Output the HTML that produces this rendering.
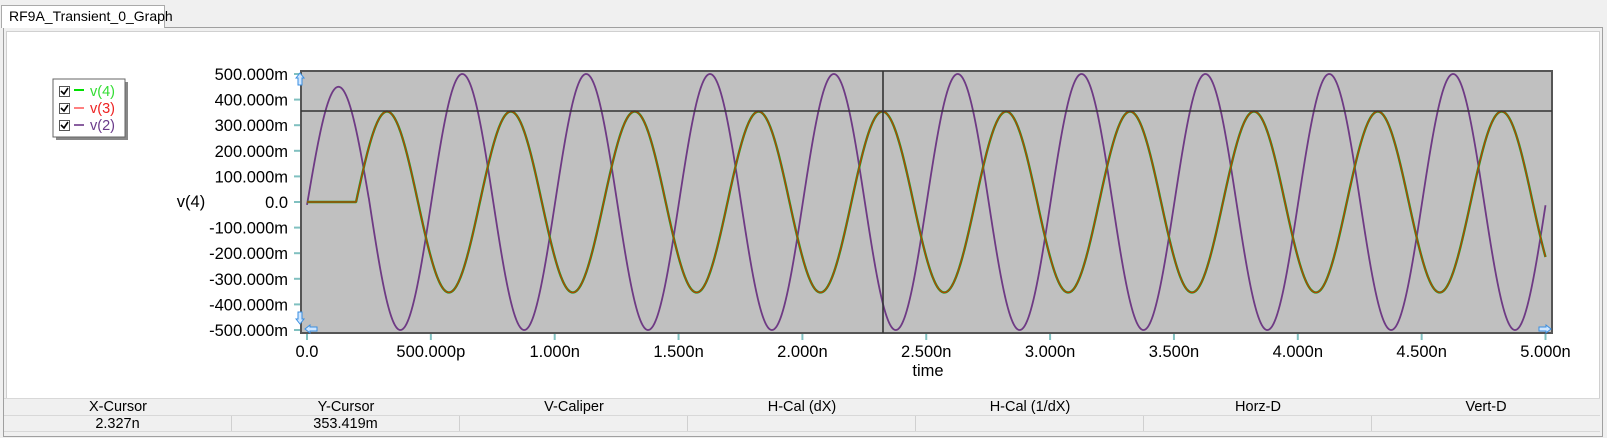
<!DOCTYPE html>
<html><head><meta charset="utf-8">
<style>
*{margin:0;padding:0;box-sizing:border-box}
body{width:1607px;height:438px;background:#f0f0f0;font-family:"Liberation Sans",sans-serif;position:relative;overflow:hidden}
.tab{position:absolute;left:1px;top:5px;width:164px;height:23px;background:#fff;border:1px solid #aaa;border-bottom:none;font-size:14px;line-height:21px;padding-left:7px;color:#000;z-index:2}
.panel{position:absolute;left:3px;top:27px;width:1600px;height:410px;border:1px solid #a0a0a0;background:#f0f0f0}
.inner{position:absolute;left:2px;top:3px;width:1594px;height:368px;background:#fff;border:1px solid #d0d0d0}
.tbl{position:absolute;left:0;top:370px;width:1596px;height:35px;font-size:14.5px;color:#000}
.row{position:absolute;left:0;width:1596px;height:17px;display:flex}
.row div{width:228px;text-align:center;line-height:17px}
.r1{top:0;border-top:1px solid #d8d8d8}
.r2{top:17px;border-top:1px solid #d8d8d8;border-bottom:1px solid #d8d8d8}
.r2 div{border-right:1px solid #d0d0d0}
svg{position:absolute;left:0;top:0}
</style></head><body>
<div class="tab">RF9A_Transient_0_Graph</div>
<div class="panel"><div class="inner"></div>
<div class="tbl">
<div class="row r1"><div>X-Cursor</div><div>Y-Cursor</div><div>V-Caliper</div><div>H-Cal (dX)</div><div>H-Cal (1/dX)</div><div>Horz-D</div><div>Vert-D</div></div>
<div class="row r2"><div>2.327n</div><div>353.419m</div><div></div><div></div><div></div><div></div><div style="border-right:none"></div></div>
</div></div>
<svg width="1607" height="438" xmlns="http://www.w3.org/2000/svg" font-family="Liberation Sans, sans-serif">
<rect x="301" y="71" width="1251" height="262" fill="#c0c0c0" stroke="#555" stroke-width="2"/>
<g id="ticks" stroke="#80c0c0" stroke-width="2"></g>
<g id="ylab" font-size="16.5" text-anchor="end" fill="#000"></g>
<g id="xlab" font-size="16.5" text-anchor="middle" fill="#000"></g>
<path id="p2" fill="none" stroke="#6e3a84" stroke-width="1.8"/>
<path id="p4" fill="none" stroke="#22a022" stroke-width="2.4"/>
<path id="p3" fill="none" stroke="#c03a00" stroke-width="1.2"/>
<line x1="301" y1="111" x2="1552" y2="111" stroke="#333" stroke-width="1.6"/>
<line x1="883" y1="71" x2="883" y2="333" stroke="#333" stroke-width="1.6"/>
<text x="191" y="207" font-size="16.5" text-anchor="middle">v(4)</text>
<text x="928" y="376" font-size="16.5" text-anchor="middle">time</text>
<rect x="56" y="82" width="72" height="58" fill="#888"/>
<rect x="53" y="79" width="72" height="58" fill="#fff" stroke="#666" stroke-width="1"/>
<g font-size="14.5">
<rect x="59.5" y="86.5" width="10" height="10" fill="#fff" stroke="#555"/><path d="M61 91l3 3 4-6" stroke="#000" stroke-width="1.6" fill="none"/>
<line x1="74" y1="90" x2="84" y2="90" stroke="#00e000" stroke-width="2"/><text x="90" y="96" fill="#33dd33">v(4)</text>
<rect x="59.5" y="103.5" width="10" height="10" fill="#fff" stroke="#555"/><path d="M61 108l3 3 4-6" stroke="#000" stroke-width="1.6" fill="none"/>
<line x1="74" y1="108" x2="84" y2="108" stroke="#ff8080" stroke-width="2"/><text x="90" y="113" fill="#ee2222">v(3)</text>
<rect x="59.5" y="120.5" width="10" height="10" fill="#fff" stroke="#555"/><path d="M61 125l3 3 4-6" stroke="#000" stroke-width="1.6" fill="none"/>
<line x1="74" y1="125" x2="84" y2="125" stroke="#8a60a0" stroke-width="2"/><text x="90" y="130" fill="#6a3a8a">v(2)</text>
</g>
<g fill="#cfe6ff" stroke="#3a8ee0" stroke-width="1">
<path d="M296 78l4-5 4 5h-2v7h-4v-7z"/>
<path d="M296 319l4 5 4-5h-2v-7h-4v7z"/>
<path d="M310 325l-5 4 5 4v-2h7v-4h-7z"/>
<path d="M1546 325l5 4-5 4v-2h-7v-4h7z"/>
</g>
</svg>
<script>
var X0=307,SX=247.7,Y0=202,SY=256;
function X(t){return X0+t*SX}function Y(v){return Y0-v*SY}
var ns="http://www.w3.org/2000/svg";
var yl=document.getElementById('ylab'),xl=document.getElementById('xlab'),tk=document.getElementById('ticks');
var ylabs=["500.000m","400.000m","300.000m","200.000m","100.000m","0.0","-100.000m","-200.000m","-300.000m","-400.000m","-500.000m"];
for(var i=0;i<11;i++){var y=Y(0.5-i*0.1);var t=document.createElementNS(ns,'text');t.setAttribute('x',288);t.setAttribute('y',y+6);t.textContent=ylabs[i];yl.appendChild(t);
var l=document.createElementNS(ns,'line');l.setAttribute('x1',294);l.setAttribute('x2',300);l.setAttribute('y1',y);l.setAttribute('y2',y);tk.appendChild(l);}
var xlabs=["0.0","500.000p","1.000n","1.500n","2.000n","2.500n","3.000n","3.500n","4.000n","4.500n","5.000n"];
for(var i=0;i<11;i++){var x=X(i*0.5);var t=document.createElementNS(ns,'text');t.setAttribute('x',x);t.setAttribute('y',357);t.textContent=xlabs[i];xl.appendChild(t);
var l=document.createElementNS(ns,'line');l.setAttribute('x1',x);l.setAttribute('x2',x);l.setAttribute('y1',334);l.setAttribute('y2',340);tk.appendChild(l);}
var d2="",d4="";
for(var k=0;k<=3000;k++){var t=k*5/3000;
var a=0.5*(t<0.25?0.9:1);
var v2=a*Math.cos(2*Math.PI*(t-0.127)/0.5);
var v4=t<0.198?0:0.3534*Math.sin(2*Math.PI*(t-0.198)/0.5);
d2+=(k?"L":"M")+X(t).toFixed(2)+" "+Y(v2).toFixed(2);
d4+=(k?"L":"M")+X(t).toFixed(2)+" "+Y(v4).toFixed(2);}
document.getElementById('p2').setAttribute('d',d2);
document.getElementById('p4').setAttribute('d',d4);
document.getElementById('p3').setAttribute('d',d4);
</script>
</body></html>
